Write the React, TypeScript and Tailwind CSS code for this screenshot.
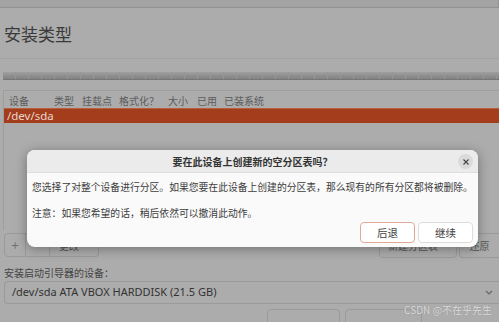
import React from 'react'

const cols = [
  { label: '设备', w: 'w-[45px]' },
  { label: '类型', w: 'w-[28px]' },
  { label: '挂载点', w: 'w-[37px]' },
  { label: '格式化？', w: 'w-[49px]' },
  { label: '大小', w: 'w-[29px]' },
  { label: '已用', w: 'w-[27px]' },
  { label: '已装系统', w: 'w-[60px]' },
]

const segments = Array.from({ length: 38 })

const App: React.FC = () => {
  return (
    <div
      className="relative w-[499px] h-[322px] overflow-hidden bg-[#acacac] text-[#3c3c3c]"
      style={{ fontFamily: '"Noto Sans CJK SC", "Noto Sans", sans-serif' }}
    >
      {/* top strip */}
      <div className="h-[8px] bg-[#a3a3a3] border-b border-[#929292] border-r" />

      {/* page title */}
      <div className="pt-[14px] pl-[4px] text-[17px] leading-[24px] text-[#3a3a3a]">安装类型</div>
      <div className="mt-[12px] h-px bg-[#a2a2a2]" />

      {/* disk usage bar */}
      <div className="mt-[13px] ml-[3px] h-[8px] flex bg-gradient-to-b from-[#a0a0a0] via-[#909090] to-[#828282] border-b border-[#767676]">
        {segments.map((_, i) => (
          <div key={i} className="w-[13px] shrink-0 border-r border-[#969696]" />
        ))}
      </div>

      {/* partition table */}
      <div className="mt-[10px] mx-[3px] mr-0 h-[140px] border-t border-l border-[#9e9e9e] flex flex-col">
        <div className="h-[17px] pt-[2px] pl-[5px] flex items-center text-[10px] text-[#5c5c5c]">
          {cols.map(c => (
            <span key={c.label} className={`${c.w} shrink-0 whitespace-nowrap`}>{c.label}</span>
          ))}
        </div>
        <div
          className="h-[15px] bg-[#a33d1b] border-t border-[#b5603e] pl-[3px] flex items-center text-[11.5px] text-[#e8d6cf]"
          style={{ fontFamily: '"Noto Sans", sans-serif' }}
        >
          /dev/sda
        </div>
      </div>

      {/* table buttons */}
      <div className="mt-[3px] flex justify-between pl-[4px] text-[10px] text-[#555]">
        <div className="flex h-[24px]">
          <div className="w-[22px] border border-[#9a9a9a] rounded-l-[4px] flex items-center justify-center text-[#707070] text-[13px]">+</div>
          <div className="w-[24px] border-y border-r border-[#9a9a9a] flex items-center justify-center text-[#8a8a8a]">−</div>
          <div className="w-[49px] border-y border-r border-[#9a9a9a] rounded-r-[4px] flex items-center justify-center">更改…</div>
        </div>
        <div className="flex h-[25px] gap-[2px]">
          <div className="w-[78px] border border-[#9a9a9a] rounded-[4px] flex items-center justify-center">新建分区表…</div>
          <div className="w-[40px] border border-[#9a9a9a] border-r-0 rounded-l-[4px] flex items-center justify-center">还原</div>
        </div>
      </div>

      {/* bootloader */}
      <div className="mt-[8px] pl-[4px] text-[10px] leading-[14px] text-[#444]">安装启动引导器的设备：</div>
      <div className="mt-px ml-[4px] h-[23px] border border-[#9a9a9a] border-r-0 rounded-l-[4px] flex items-center justify-between pl-[7px] pr-[6px]">
        <span className="text-[11px] text-[#333]" style={{ fontFamily: '"Noto Sans", sans-serif' }}>
          /dev/sda ATA VBOX HARDDISK (21.5 GB)
        </span>
        <svg width="8" height="5" viewBox="0 0 8 5" fill="none" stroke="#666" strokeWidth="1.2">
          <path d="M1 1l3 3 3-3" />
        </svg>
      </div>

      {/* navigation buttons */}
      <div className="mt-[5px] flex justify-end gap-[5px] pr-[77px]">
        <div className="w-[73px] h-[22px] border border-[#9a9a9a] rounded-[4px]" />
        <div className="w-[77px] h-[22px] border border-[#9a9a9a] rounded-[4px]" />
      </div>

      {/* watermark */}
      <div className="absolute right-[7px] top-[304px] text-[10px] leading-[12px] text-[#dcdcdc] [text-shadow:0_0_1px_#888]">
        CSDN @不在乎先生
      </div>

      {/* dialog */}
      <div className="absolute left-[27px] top-[150px] w-[451px] h-[97px] rounded-[8px] overflow-hidden bg-[#fafafa] shadow-[0_2px_12px_rgba(0,0,0,0.35)]">
        <div className="relative h-[23px] bg-[#ebebeb] border-b border-[#dedede] flex items-center justify-center">
          <span className="text-[10px] font-bold text-[#333]">要在此设备上创建新的空分区表吗？</span>
          <div className="absolute right-[5px] top-[4px] w-[15px] h-[15px] rounded-full bg-[#dadada] flex items-center justify-center">
            <svg width="6" height="6" viewBox="0 0 6 6" stroke="#444" strokeWidth="1.1">
              <path d="M0.5 0.5l5 5M5.5 0.5l-5 5" />
            </svg>
          </div>
        </div>
        <div className="px-[5px] pt-[7px] text-[9.8px] text-[#3c3c3c]">
          <p className="leading-[14px] whitespace-nowrap">您选择了对整个设备进行分区。如果您要在此设备上创建的分区表，那么现有的所有分区都将被删除。</p>
          <p className="mt-[12px] leading-[14px] whitespace-nowrap">注意：如果您希望的话，稍后依然可以撤消此动作。</p>
          <div className="mt-[2px] flex justify-end gap-[3px]">
            <button className="w-[55px] h-[21px] rounded-[4px] border border-[#e2a896] bg-white text-[10.5px] text-[#444]">后退</button>
            <button className="w-[55px] h-[21px] rounded-[4px] border border-[#dcdcdc] bg-white text-[10.5px] text-[#444]">继续</button>
          </div>
        </div>
      </div>
    </div>
  )
}

export default App
